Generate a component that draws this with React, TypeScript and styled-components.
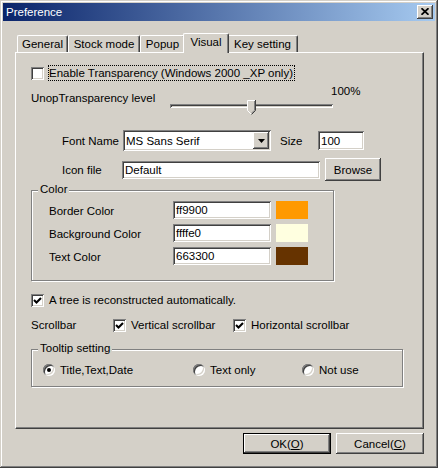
import React from "react";
import styled, { createGlobalStyle, css } from "styled-components";

const Global = createGlobalStyle`
  html, body { margin: 0; padding: 0; background: #d4d0c8; }
  body {
    font-family: "Liberation Sans", Arial, sans-serif;
    font-size: 11.5px;
    color: #000;
  }
  * { box-sizing: border-box; }
`;

const raised = css`
  background: #d4d0c8;
  box-shadow: inset -1px -1px #404040, inset 1px 1px #fff, inset -2px -2px #808080,
    inset 2px 2px #d4d0c8;
`;

const sunken = css`
  background: #fff;
  box-shadow: inset 1px 1px #808080, inset -1px -1px #fff, inset 2px 2px #404040,
    inset -2px -2px #d4d0c8;
`;

const Window = styled.div`
  width: 438px;
  height: 468px;
  padding: 3px;
  background: #d4d0c8;
  box-shadow: inset -1px -1px #404040, inset 1px 1px #d4d0c8, inset -2px -2px #808080,
    inset 2px 2px #fff;
  display: flex;
  flex-direction: column;
`;

const TitleBar = styled.div`
  flex: none;
  height: 18px;
  background: linear-gradient(to right, #0a246a, #a6caf0);
  display: flex;
  align-items: center;
  justify-content: space-between;
  padding: 0 2px 0 3px;
`;

const Title = styled.span`
  color: #fff;
  line-height: 14px;
`;

const CloseButton = styled.div`
  width: 16px;
  height: 14px;
  ${raised};
  display: flex;
  align-items: center;
  justify-content: center;
  padding: 0 1px 1px 0;
`;

const Body = styled.div`
  flex: 1;
  display: flex;
  flex-direction: column;
  padding: 12px 11px 0 12px;
`;

const TabRow = styled.div`
  flex: none;
  height: 19px;
  display: flex;
  align-items: flex-end;
  padding-left: 2px;
  position: relative;
  z-index: 1;
`;

const Tab = styled.div<{ $w: number; $active?: boolean }>`
  width: ${(p) => p.$w}px;
  height: 17px;
  flex: none;
  background: #d4d0c8;
  border-top: 1px solid #fff;
  border-left: 1px solid #fff;
  border-right: 1px solid #404040;
  box-shadow: inset -1px 0 #808080;
  border-radius: 2px 2px 0 0;
  display: flex;
  align-items: center;
  justify-content: center;
  line-height: 14px;
  padding-bottom: 1px;
  white-space: nowrap;
  ${(p) =>
    p.$active &&
    css`
      height: 20px;
      margin: 0 -2px -1px;
      position: relative;
      z-index: 2;
      padding-bottom: 3px;
    `}
`;

const Panel = styled.div`
  flex: none;
  height: 377px;
  border-top: 1px solid #fff;
  border-left: 1px solid #fff;
  border-right: 1px solid #404040;
  border-bottom: 1px solid #404040;
  box-shadow: inset -1px -1px #808080;
  padding-left: 15px;
  display: flex;
  flex-direction: column;
`;

const Row = styled.div<{ $mt?: number; $h: number }>`
  flex: none;
  display: flex;
  align-items: center;
  margin-top: ${(p) => p.$mt ?? 0}px;
  height: ${(p) => p.$h}px;
  white-space: nowrap;
`;

const CheckItem = styled.div<{ $w?: number }>`
  display: flex;
  align-items: center;
  gap: 5px;
  flex: none;
  ${(p) => p.$w && `width: ${p.$w}px;`}
  line-height: 14px;
`;

const Box = styled.span`
  width: 13px;
  height: 13px;
  flex: none;
  ${sunken};
  display: block;
  svg { display: block; }
`;

const FocusText = styled.span`
  border: 1px dotted #000;
  margin-left: -1px;
  height: 16px;
  line-height: 14px;
  padding-right: 1px;
`;

const SliderRow = styled.div`
  flex: none;
  display: flex;
  align-items: flex-start;
  margin-top: 4px;
  height: 30px;
`;

const SliderLabel = styled.span`
  width: 139px;
  flex: none;
  margin-top: 6px;
  line-height: 14px;
  white-space: nowrap;
`;

const SliderBox = styled.div`
  width: 163px;
  flex: none;
  display: flex;
  flex-direction: column;
`;

const Percent = styled.span`
  margin-left: 161px;
  height: 12px;
  line-height: 12px;
  white-space: nowrap;
`;

const TrackArea = styled.div`
  position: relative;
  height: 18px;
`;

const Track = styled.div`
  margin-top: 7px;
  height: 4px;
  box-shadow: inset 1px 1px #808080, inset -1px -1px #fff, inset 2px 2px #404040,
    inset -2px -2px #d4d0c8;
`;

const Thumb = styled.div`
  position: absolute;
  top: 3px;
  left: 77px;
  width: 9px;
  height: 15px;
  svg { display: block; }
`;

const FieldLabel = styled.span<{ $ml?: number; $w: number }>`
  flex: none;
  margin-left: ${(p) => p.$ml ?? 0}px;
  width: ${(p) => p.$w}px;
  line-height: 14px;
  white-space: nowrap;
`;

const Field = styled.div<{ $w: number; $h: number }>`
  flex: none;
  width: ${(p) => p.$w}px;
  height: ${(p) => p.$h}px;
  ${sunken};
  padding-left: 3px;
  display: flex;
  align-items: center;
  line-height: 14px;
  white-space: nowrap;
  overflow: hidden;
`;

const Combo = styled.div`
  flex: none;
  width: 148px;
  height: 21px;
  ${sunken};
  padding: 2px 2px 2px 3px;
  display: flex;
  align-items: center;
  line-height: 14px;
`;

const ComboText = styled.span`
  flex: 1;
  white-space: nowrap;
`;

const DropButton = styled.span`
  width: 16px;
  height: 17px;
  flex: none;
  ${raised};
  display: flex;
  align-items: center;
  justify-content: center;
  svg { display: block; }
`;

const Button = styled.div<{ $w: number; $h: number; $ml?: number; $default?: boolean }>`
  flex: none;
  width: ${(p) => p.$w}px;
  height: ${(p) => p.$h}px;
  margin-left: ${(p) => p.$ml ?? 0}px;
  ${raised};
  display: flex;
  align-items: center;
  justify-content: center;
  line-height: 14px;
  white-space: nowrap;
  ${(p) =>
    p.$default &&
    css`
      border: 1px solid #000;
    `}
`;

const Group = styled.div<{ $w: number; $mt: number }>`
  flex: none;
  position: relative;
  width: ${(p) => p.$w}px;
  margin-top: ${(p) => p.$mt}px;
  border: 1px solid #808080;
  box-shadow: inset 1px 1px #fff, 1px 1px #fff;
`;

const Legend = styled.span`
  position: absolute;
  top: -9px;
  left: 6px;
  padding: 0 2px;
  background: #d4d0c8;
  line-height: 14px;
  white-space: nowrap;
`;

const GroupBody = styled.div<{ $pad: string; $gap?: number }>`
  display: flex;
  flex-direction: column;
  padding: ${(p) => p.$pad};
  gap: ${(p) => p.$gap ?? 0}px;
`;

const ColorLabel = styled.span`
  flex: none;
  width: 124px;
  align-self: flex-start;
  margin-top: 3px;
  line-height: 14px;
  white-space: nowrap;
`;

const Swatch = styled.span<{ $c: string }>`
  flex: none;
  width: 32px;
  height: 18px;
  margin-left: 5px;
  background: ${(p) => p.$c};
`;

const RadioItem = styled.div<{ $w?: number }>`
  display: flex;
  align-items: center;
  gap: 5px;
  flex: none;
  ${(p) => p.$w && `width: ${p.$w}px;`}
  line-height: 14px;
  white-space: nowrap;
`;

const Radio = styled.span<{ $on?: boolean }>`
  width: 12px;
  height: 12px;
  flex: none;
  border-radius: 50%;
  background: #fff;
  box-shadow: inset 1px 1px #808080, inset -1px -1px #fff, inset 2px 2px #404040,
    inset -2px -2px #d4d0c8;
  display: flex;
  align-items: center;
  justify-content: center;
  &::after {
    content: "";
    width: 4px;
    height: 4px;
    border-radius: 50%;
    background: #000;
    display: ${(p) => (p.$on ? "block" : "none")};
  }
`;

const ButtonBar = styled.div`
  flex: none;
  display: flex;
  justify-content: flex-end;
  gap: 5px;
  margin-top: 4px;
`;

const CheckMark = () => (
  <svg width="13" height="13" viewBox="0 0 13 13">
    <polyline points="3,6 5.5,8.5 10,4" fill="none" stroke="#000" strokeWidth="2.1" />
  </svg>
);

const Check = ({ checked }: { checked?: boolean }) => <Box>{checked && <CheckMark />}</Box>;

const CloseGlyph = () => (
  <svg width="8" height="7" viewBox="0 0 8 7">
    <path d="M0.5 0.2 L7.5 6.8 M7.5 0.2 L0.5 6.8" stroke="#000" strokeWidth="1.7" fill="none" />
  </svg>
);

const ArrowDown = () => (
  <svg width="7" height="4" viewBox="0 0 7 4">
    <polygon points="0,0 7,0 3.5,4" fill="#000" />
  </svg>
);

const ThumbShape = () => (
  <svg width="9" height="15" viewBox="0 0 9 15">
    <polygon points="0,0 9,0 9,10.5 4.5,15 0,10.5" fill="#d4d0c8" />
    <path d="M0.5 10.5 V0.5 H8" stroke="#fff" strokeWidth="1" fill="none" />
    <path d="M0.5 10.5 L4.5 14.5" stroke="#fff" strokeWidth="1" fill="none" />
    <path d="M8.5 0 V10.5 L4.5 14.5" stroke="#404040" strokeWidth="1" fill="none" />
    <path d="M7.5 1 V10.2 L4.5 13.2" stroke="#808080" strokeWidth="1" fill="none" />
  </svg>
);

const tabs = [
  { label: "General", w: 51 },
  { label: "Stock mode", w: 72 },
  { label: "Popup", w: 45 },
  { label: "Visual", w: 46, active: true },
  { label: "Key setting", w: 71 },
];

const colors = [
  { label: "Border Color", value: "ff9900", c: "#ff9900" },
  { label: "Background Color", value: "ffffe0", c: "#ffffe0" },
  { label: "Text Color", value: "663300", c: "#663300" },
];

export default function App() {
  return (
    <>
      <Global />
      <Window>
        <TitleBar>
          <Title>Preference</Title>
          <CloseButton>
            <CloseGlyph />
          </CloseButton>
        </TitleBar>
        <Body>
          <TabRow>
            {tabs.map((t) => (
              <Tab key={t.label} $w={t.w} $active={t.active}>
                {t.label}
              </Tab>
            ))}
          </TabRow>
          <Panel>
            <Row $mt={12} $h={16}>
              <CheckItem>
                <Check />
                <FocusText>Enable Transparency (Windows 2000 _XP only)</FocusText>
              </CheckItem>
            </Row>

            <SliderRow>
              <SliderLabel>UnopTransparency level</SliderLabel>
              <SliderBox>
                <Percent>100%</Percent>
                <TrackArea>
                  <Track />
                  <Thumb>
                    <ThumbShape />
                  </Thumb>
                </TrackArea>
              </SliderBox>
            </SliderRow>

            <Row $mt={15} $h={21}>
              <FieldLabel $ml={31} $w={61}>
                Font Name
              </FieldLabel>
              <Combo>
                <ComboText>MS Sans Serif</ComboText>
                <DropButton>
                  <ArrowDown />
                </DropButton>
              </Combo>
              <FieldLabel $ml={9} $w={38}>
                Size
              </FieldLabel>
              <Field $w={46} $h={19}>
                100
              </Field>
            </Row>

            <Row $mt={7} $h={23}>
              <FieldLabel $ml={31} $w={60}>
                Icon file
              </FieldLabel>
              <Field $w={198} $h={18}>
                Default
              </Field>
              <Button $w={56} $h={23} $ml={5}>
                Browse
              </Button>
            </Row>

            <Group $w={303} $mt={9}>
              <Legend>Color</Legend>
              <GroupBody $pad="10px 0 15px 17px" $gap={5}>
                {colors.map((c) => (
                  <Row key={c.label} $h={18}>
                    <ColorLabel>{c.label}</ColorLabel>
                    <Field $w={98} $h={18}>
                      {c.value}
                    </Field>
                    <Swatch $c={c.c} />
                  </Row>
                ))}
              </GroupBody>
            </Group>

            <Row $mt={11} $h={16}>
              <CheckItem>
                <Check checked />
                <span>A tree is reconstructed automatically.</span>
              </CheckItem>
            </Row>

            <Row $mt={9} $h={16}>
              <FieldLabel $w={82}>Scrollbar</FieldLabel>
              <CheckItem $w={120}>
                <Check checked />
                <span>Vertical scrollbar</span>
              </CheckItem>
              <CheckItem>
                <Check checked />
                <span>Horizontal scrollbar</span>
              </CheckItem>
            </Row>

            <Group $w={372} $mt={16}>
              <Legend>Tooltip setting</Legend>
              <GroupBody $pad="13px 0 9px 11px">
                <Row $h={14}>
                  <RadioItem $w={150}>
                    <Radio $on />
                    <span>Title,Text,Date</span>
                  </RadioItem>
                  <RadioItem $w={109}>
                    <Radio />
                    <span>Text only</span>
                  </RadioItem>
                  <RadioItem>
                    <Radio />
                    <span>Not use</span>
                  </RadioItem>
                </Row>
              </GroupBody>
            </Group>
          </Panel>
          <ButtonBar>
            <Button $w={88} $h={21} $default>
              <span>
                OK(<u>O</u>)
              </span>
            </Button>
            <Button $w={88} $h={21}>
              <span>
                Cancel(<u>C</u>)
              </span>
            </Button>
          </ButtonBar>
        </Body>
      </Window>
    </>
  );
}
